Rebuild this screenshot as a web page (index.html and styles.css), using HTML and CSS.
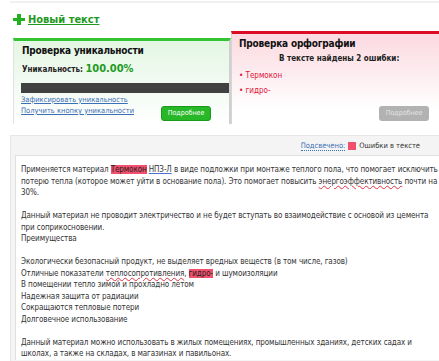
FILE: index.html
```html
<!DOCTYPE html>
<html lang="ru">
<head>
    <meta charset="UTF-8">
    <title>Проверка текста</title>
    <link rel="stylesheet" href="styles.css">
</head>
<body>
    <div class="topline"></div>
    <div class="newtext">
        <span class="plus"></span>
        <a href="#">Новый текст</a>
    </div>

    <div class="checks">
        <div class="box uniq">
            <h2>Проверка уникальности</h2>
            <p class="percent">Уникальность: <b>100.00%</b></p>
            <div class="bar"></div>
            <div class="uniq-foot">
                <div class="links">
                    <a href="#">Зафиксировать уникальность</a>
                    <a href="#">Получить кнопку уникальности</a>
                </div>
                <span class="btn green">Подробнее</span>
            </div>
        </div>
        <div class="box spell">
            <h2>Проверка орфографии</h2>
            <p class="found">В тексте найдены 2 ошибки:</p>
            <ul>
                <li>Термокон</li>
                <li>гидро-</li>
            </ul>
            <div class="spell-foot">
                <span class="btn gray">Подробнее</span>
            </div>
        </div>
    </div>

    <div class="result">
        <div class="legend">
            <span class="lit">Подсвечено:</span>
            <span class="sq"></span>
            <span>Ошибки в тексте</span>
        </div>
        <div class="text">
            <p>Применяется материал <span class="err">Термокон</span> <span class="typo">НПЗ-Л</span> в виде подложки при монтаже теплого пола, что помогает исключить потерю тепла (которое может уйти в основание пола). Это помогает повысить <span class="wavy">энергоэффективность</span> почти на 30%.</p>
            <p>Данный материал не проводит электричество и не будет вступать во взаимодействие с основой из цемента при соприкосновении.<br>Преимущества</p>
            <p>Экологически безопасный продукт, не выделяет вредных веществ (в том числе, газов)<br>
            Отличные показатели <span class="wavy">теплосопротивления</span>, <span class="err">гидро-</span> и шумоизоляции<br>
            В помещении тепло зимой и прохладно летом<br>
            Надежная защита от радиации<br>
            Сокращаются тепловые потери<br>
            Долговечное использование</p>
            <p>Данный материал можно использовать в жилых помещениях, промышленных зданиях, детских садах и школах, а также на складах, в магазинах и павильонах.</p>
        </div>
    </div>
</body>
</html>
```

FILE: styles.css
```css
*{
    padding: 0;
    margin: 0;
    list-style: none;
    box-sizing: border-box;
}
html, body{
    overflow: hidden;
}
body{
    width: 460px;
    font-family: "DejaVu Sans Condensed", "DejaVu Sans", Verdana, sans-serif;
    color: #222;
    background: #fff;
}
a{
    color: #3b6fb6;
}
.topline{
    height: 2px;
    margin: 1px 0 0 10px;
    background: #f0f0f0;
}
.newtext{
    display: flex;
    align-items: center;
    gap: 3px;
    height: 16px;
    margin: 8px 0 0 13px;
}
.newtext a{
    color: #1f9a1f;
    font-weight: bold;
    font-size: 11px;
}
.plus{
    position: relative;
    width: 12px;
    height: 11px;
}
.plus::before,
.plus::after{
    content: "";
    position: absolute;
    background: #22b022;
}
.plus::before{
    left: 4px;
    top: 0;
    width: 4px;
    height: 11px;
}
.plus::after{
    left: 0;
    top: 4px;
    width: 12px;
    height: 3px;
}

.checks{
    display: flex;
    align-items: flex-end;
    margin: 4px 0 0 13px;
    height: 93px;
}
.box{
    display: flex;
    flex-direction: column;
    border: 1px solid #e2e2e2;
    border-bottom: 0;
}
.box h2{
    font-size: 10px;
    font-weight: bold;
    letter-spacing: -0.2px;
    color: #111;
}
.uniq{
    width: 218px;
    height: 86px;
    border-top: 3px solid #33c433;
    background: linear-gradient(#e4f6e4, #fff);
    border-right: 2px solid #d0d0d0;
}
.uniq h2{
    margin: 4px 0 0 8px;
}
.percent{
    margin: 6px 0 0 8px;
    font-size: 8px;
    font-weight: bold;
    color: #222;
}
.percent b{
    font-size: 11px;
    color: #1f9a1f;
}
.bar{
    height: 10px;
    margin: 8px 0 0 7px;
    background: #414141;
}
.uniq-foot{
    flex: 1;
    display: flex;
    justify-content: space-between;
    padding: 0 18px 3px 7px;
}
.links{
    display: flex;
    flex-direction: column;
    margin-top: 1px;
}
.links a{
    font-size: 7.5px;
    line-height: 11px;
}
.btn{
    display: block;
    align-self: flex-end;
    width: 50px;
    height: 15px;
    border-radius: 3px;
    font-size: 7px;
    line-height: 15px;
    text-align: center;
}
.btn.green{
    background: #27b827;
    border: 1px solid #1a9a1a;
    color: #fff;
    line-height: 13px;
}
.btn.gray{
    background: #b2b2b2;
    color: #e4e4e4;
}
.spell{
    flex: 1;
    height: 93px;
    border-top: 3px solid #dd0b24;
    border-left: 1px solid #d5d5d5;
    background: linear-gradient(#fbd9e0, #fff 85%);
}
.spell h2{
    margin: 4px 0 0 7px;
}
.found{
    margin-top: 5px;
    padding-left: 47px;
    font-size: 8px;
    font-weight: bold;
}
.spell ul{
    margin: 5px 0 0 7px;
}
.spell li{
    font-size: 8px;
    line-height: 15px;
    color: #e0143a;
}
.spell li::before{
    content: "• ";
}
.spell-foot{
    display: flex;
    margin-top: auto;
    padding: 0 0 3px 147px;
}

.result{
    margin: 11px 0 0 10px;
    padding: 0 0 0 4px;
    background: #f4f4f4;
    border: 1px solid #e6e6e6;
}
.legend{
    display: flex;
    justify-content: flex-end;
    align-items: center;
    gap: 3px;
    height: 19px;
    padding-right: 39px;
    font-size: 7.5px;
    color: #333;
}
.lit{
    color: #3b6fb6;
    border-bottom: 1px dotted #3b6fb6;
}
.sq{
    width: 8px;
    height: 8px;
    background: #f0506e;
}
.text{
    background: #fff;
    border-left: 1px solid #e0e0e0;
    border-top: 1px solid #e0e0e0;
    padding: 8px 17px 0 5px;
    font-size: 8px;
    letter-spacing: -0.1px;
    line-height: 11.5px;
    color: #333;
}
.text p{
    margin-bottom: 11.5px;
}
.err{
    background: #f0506e;
    color: #222;
}
.typo{
    text-decoration: underline #4a6fd8;
}
.wavy{
    text-decoration: underline wavy #e03040;
}
```
